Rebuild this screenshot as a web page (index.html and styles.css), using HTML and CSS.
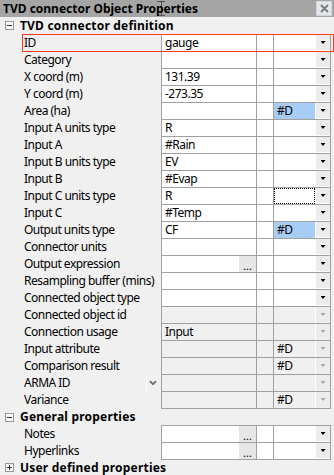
FILE: index.html
```html
<!DOCTYPE html>
<html>
<head>
<meta charset="utf-8">
<link rel="stylesheet" href="styles.css">
</head>
<body>
<div class="panel">
  <div class="titlebar">
    <span class="title">TVD connector Object Properties</span>
    <span class="close"><svg width="9" height="9" viewBox="0 0 9 9"><path d="M1 1L8 8M8 1L1 8" stroke="#7a7a7a" stroke-width="1.8"/></svg></span>
    <svg class="cursor" width="11" height="17" viewBox="0 0 11 17"><path d="M1.5 1.5H9.5M1.5 15.5H9.5M5.5 1.5V15.5" stroke="#000" stroke-width="1" stroke-dasharray="1 1"/></svg>
  </div>

  <div class="sec-head first"><span class="tog minus"></span>TVD connector definition</div>
  <div class="grid">
    <div class="row sel"><div class="lab">ID</div><div class="v">gauge</div><div class="s"></div><div class="d"><span class="dv"></span><span class="btn"><i class="arr"></i></span></div></div>
    <div class="row"><div class="lab">Category</div><div class="v"></div><div class="s"></div><div class="d"><span class="dv"></span><span class="btn"><i class="arr"></i></span></div></div>
    <div class="row"><div class="lab">X coord (m)</div><div class="v">131.39</div><div class="s"></div><div class="d"><span class="dv"></span><span class="btn"><i class="arr"></i></span></div></div>
    <div class="row"><div class="lab">Y coord (m)</div><div class="v">-273.35</div><div class="s"></div><div class="d"><span class="dv"></span><span class="btn"><i class="arr"></i></span></div></div>
    <div class="row"><div class="lab">Area (ha)</div><div class="v"></div><div class="s"></div><div class="d"><span class="dv hl">#D</span><span class="btn"><i class="arr"></i></span></div></div>
    <div class="row"><div class="lab">Input A units type</div><div class="v">R</div><div class="s"></div><div class="d"><span class="dv"></span><span class="btn"><i class="arr"></i></span></div></div>
    <div class="row"><div class="lab">Input A</div><div class="v">#Rain</div><div class="s"></div><div class="d"><span class="dv"></span><span class="btn"><i class="arr"></i></span></div></div>
    <div class="row"><div class="lab">Input B units type</div><div class="v">EV</div><div class="s"></div><div class="d"><span class="dv"></span><span class="btn"><i class="arr"></i></span></div></div>
    <div class="row"><div class="lab">Input B</div><div class="v">#Evap</div><div class="s"></div><div class="d"><span class="dv"></span><span class="btn"><i class="arr"></i></span></div></div>
    <div class="row"><div class="lab">Input C units type</div><div class="v">R</div><div class="s"></div><div class="d"><span class="dv focus"></span><span class="btn"><i class="arr"></i></span></div></div>
    <div class="row"><div class="lab">Input C</div><div class="v">#Temp</div><div class="s"></div><div class="d"><span class="dv"></span><span class="btn"><i class="arr"></i></span></div></div>
    <div class="row"><div class="lab">Output units type</div><div class="v">CF</div><div class="s"></div><div class="d"><span class="dv hl">#D</span><span class="btn"><i class="arr"></i></span></div></div>
    <div class="row"><div class="lab">Connector units</div><div class="v"></div><div class="s"></div><div class="d"><span class="dv"></span><span class="btn"><i class="arr"></i></span></div></div>
    <div class="row"><div class="lab">Output expression</div><div class="v"><span class="vt"></span><span class="dots">...</span></div><div class="s"></div><div class="d"><span class="dv"></span><span class="btn"><i class="arr"></i></span></div></div>
    <div class="row"><div class="lab">Resampling buffer (mins)</div><div class="v"></div><div class="s"></div><div class="d"><span class="dv"></span><span class="btn"><i class="arr"></i></span></div></div>
    <div class="row"><div class="lab">Connected object type</div><div class="v"></div><div class="s"></div><div class="d"><span class="dv"></span><span class="btn"><i class="arr"></i></span></div></div>
    <div class="row dis"><div class="lab">Connected object id</div><div class="v"></div><div class="s"></div><div class="d"><span class="dv"></span><span class="btn"><i class="arr"></i></span></div></div>
    <div class="row dis"><div class="lab">Connection usage</div><div class="v">Input</div><div class="s"></div><div class="d"><span class="dv"></span><span class="btn"><i class="arr"></i></span></div></div>
    <div class="row dis"><div class="lab">Input attribute</div><div class="v"></div><div class="s"></div><div class="d"><span class="dv">#D</span><span class="btn"><i class="arr"></i></span></div></div>
    <div class="row dis"><div class="lab">Comparison result</div><div class="v"></div><div class="s"></div><div class="d"><span class="dv">#D</span><span class="btn"><i class="arr"></i></span></div></div>
    <div class="row dis"><div class="lab"><span>ARMA ID</span><span class="chev"><svg width="8" height="6" viewBox="0 0 8 6"><path d="M1 1.2L4 4.2L7 1.2" fill="none" stroke="#6f6f6f" stroke-width="1.8"/></svg></span></div><div class="v"></div><div class="s"></div><div class="d"><span class="dv"></span><span class="btn"><i class="arr"></i></span></div></div>
    <div class="row dis"><div class="lab">Variance</div><div class="v"></div><div class="s"></div><div class="d"><span class="dv">#D</span><span class="btn"><i class="arr"></i></span></div></div>
  </div>

  <div class="sec-head"><span class="tog minus"></span>General properties</div>
  <div class="grid">
    <div class="row"><div class="lab">Notes</div><div class="v"><span class="vt"></span><span class="dots">...</span></div><div class="s"></div><div class="d"><span class="dv"></span><span class="btn"><i class="arr"></i></span></div></div>
    <div class="row"><div class="lab">Hyperlinks</div><div class="v"><span class="vt"></span><span class="dots">...</span></div><div class="s"></div><div class="d"><span class="dv"></span><span class="btn"><i class="arr"></i></span></div></div>
  </div>

  <div class="sec-head last"><span class="tog plus"></span>User defined properties</div>
</div>
</body>
</html>
```

FILE: styles.css
```css
* { box-sizing: border-box; }
html, body {
  margin: 0;
  padding: 0;
  background: #f0f0f0;
}
body {
  font-family: "Noto Sans", "Open Sans", sans-serif;
  font-size: 12px;
  color: #000;
  width: 334px;
  height: 475px;
  overflow: hidden;
}
.panel {
  width: 334px;
  display: flex;
  flex-direction: column;
}
.titlebar {
  position: relative;
  height: 17px;
  background: #a5a5a5;
  display: flex;
  align-items: center;
  padding-left: 3px;
}
.title {
  font-weight: bold;
  font-size: 12px;
  line-height: 17px;
  white-space: nowrap;
  flex: 1;
}
.close {
  width: 16px;
  height: 15px;
  margin-right: 2px;
  background: #e3e7ec;
  border: 1px solid #d2d6dc;
  display: flex;
  align-items: center;
  justify-content: center;
}
.cursor {
  position: absolute;
  left: 156px;
  top: 0;
}
.sec-head {
  height: 16px;
  display: flex;
  align-items: center;
  font-weight: bold;
  white-space: nowrap;
  padding-left: 5px;
  line-height: 14px;
  letter-spacing: 0.2px;
}
.sec-head.first {
  height: 17px;
}
.sec-head.last {
  height: 15px;
}
.tog {
  position: relative;
  width: 9px;
  height: 9px;
  border: 1px solid #9a9a9a;
  background: #f7f7f7;
  margin-right: 6px;
  flex: none;
}
.tog::before {
  content: "";
  position: absolute;
  left: 1px;
  top: 3px;
  width: 5px;
  height: 1px;
  background: #333;
}
.tog.plus::after {
  content: "";
  position: absolute;
  left: 3px;
  top: 1px;
  width: 1px;
  height: 5px;
  background: #333;
}
.grid::before {
  content: "";
  display: block;
  height: 1px;
  width: 170px;
  margin-left: 161px;
  background: #a0a0a0;
}
.row {
  position: relative;
  display: grid;
  grid-template-columns: 161px 95px 17px 58px;
  height: 17px;
  letter-spacing: -0.5px;
}
.row.sel::after {
  content: "";
  position: absolute;
  left: 22px;
  top: -1px;
  right: 0;
  bottom: 0;
  border: 1px solid #ff3b1a;
}
.lab {
  padding-left: 24px;
  line-height: 16px;
  white-space: nowrap;
  display: flex;
  justify-content: space-between;
}
.chev {
  width: 11px;
  height: 17px;
  border-left: 1px solid #fbfbfb;
  padding-left: 2px;
  padding-top: 5px;
  margin-right: 4px;
  display: flex;
  align-items: flex-start;
}
.v, .s, .d {
  background: #fff;
  border-left: 1px solid #a0a0a0;
  border-bottom: 1px solid #a0a0a0;
  line-height: 16px;
  white-space: nowrap;
}
.v {
  padding-left: 3px;
  display: flex;
}
.vt { flex: 1; }
.dots {
  width: 17px;
  height: 16px;
  background: #e6e6e6;
  line-height: 19px;
  text-align: center;
  font-size: 11px;
  letter-spacing: 0;
}
.d {
  border-right: 1px solid #a0a0a0;
  display: flex;
}
.dv {
  flex: 1;
  padding-left: 3px;
}
.dv.hl { background: #a8cdf4; }
.dv.focus {
  outline: 1px dotted #000;
  outline-offset: -1px;
}
.btn {
  width: 15px;
  height: 15px;
  background: #ececec;
  border-left: 1px solid #fff;
  display: flex;
  align-items: center;
  justify-content: center;
}
.arr {
  display: block;
  width: 5px;
  height: 3px;
  background: #000;
  clip-path: polygon(0 0, 100% 0, 50% 100%);
}
.dis .v, .dis .s, .dis .d {
  background: #f0f0f0;
}
.dis .btn { background: #ececec; }
.dis .arr { background: #a6a6a6; }
```
